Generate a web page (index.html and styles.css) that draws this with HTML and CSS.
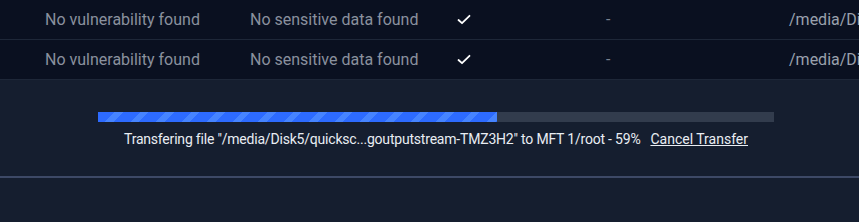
FILE: index.html
```html
<!DOCTYPE html>
<html>
<head>
<meta charset="utf-8">
<link rel="stylesheet" href="styles.css">
</head>
<body>
<div class="table">
  <div class="row">
    <div class="cell">No vulnerability found</div>
    <div class="cell">No sensitive data found</div>
    <div class="cell check"><svg width="14" height="11" viewBox="0 0 14 11"><path d="M1.5 6 L5 9.2 L12.5 1.8" fill="none" stroke="#ffffff" stroke-width="1.8" stroke-linecap="round" stroke-linejoin="round"/></svg></div>
    <div class="cell dash">-</div>
    <div class="cell path">/media/Di</div>
  </div>
  <div class="row">
    <div class="cell">No vulnerability found</div>
    <div class="cell">No sensitive data found</div>
    <div class="cell check"><svg width="14" height="11" viewBox="0 0 14 11"><path d="M1.5 6 L5 9.2 L12.5 1.8" fill="none" stroke="#ffffff" stroke-width="1.8" stroke-linecap="round" stroke-linejoin="round"/></svg></div>
    <div class="cell dash">-</div>
    <div class="cell path">/media/Di</div>
  </div>
</div>
<div class="panel">
  <div class="transfer">
    <div class="track"><div class="fill" style="width:59%"></div></div>
    <div class="status"><span class="msg">Transfering file "/media/Disk5/quicksc...goutputstream-TMZ3H2" to MFT 1/root - 59%</span><a class="cancel" href="#">Cancel Transfer</a></div>
  </div>
  <div class="divider"></div>
</div>
</body>
</html>
```
FILE: styles.css
```css
html, body {
  margin: 0;
  padding: 0;
}
body {
  width: 859px;
  height: 222px;
  overflow: hidden;
  background: #151e2f;
  font-family: Roboto, "Liberation Sans", sans-serif;
}
.table {
  background: #0a1020;
}
.row {
  display: grid;
  grid-template-columns: 205px 205px 150px 184px 1fr;
  padding-left: 45px;
  height: 39px;
  border-bottom: 1px solid #1e2738;
  align-items: center;
}
.cell {
  font-size: 16px;
  color: #8a919e;
  white-space: nowrap;
}
.check {
  padding-left: 2px;
  display: flex;
  align-items: center;
}
.dash {
  color: #7a8190;
  padding-left: 1px;
}
.path {
  color: #9aa1ad;
}
.panel {
  padding-top: 32px;
}
.transfer {
  margin-left: 98px;
  width: 676px;
  display: flex;
  flex-direction: column;
  align-items: center;
}
.track {
  align-self: stretch;
  height: 10px;
  background: #323c4d;
}
.fill {
  height: 100%;
  background: repeating-linear-gradient(135deg, #2d6bff 0px, #2d6bff 12px, #4684ff 12px, #4684ff 18px);
}
.status {
  margin-top: 7px;
  font-size: 14px;
  line-height: 20px;
  color: #e9edf3;
  white-space: nowrap;
}
.msg {
  letter-spacing: -0.2px;
}
.cancel {
  margin-left: 10px;
  color: #e9edf3;
  text-decoration: underline;
}
.divider {
  margin-top: 27px;
  height: 2px;
  background: #3d4966;
}
```
